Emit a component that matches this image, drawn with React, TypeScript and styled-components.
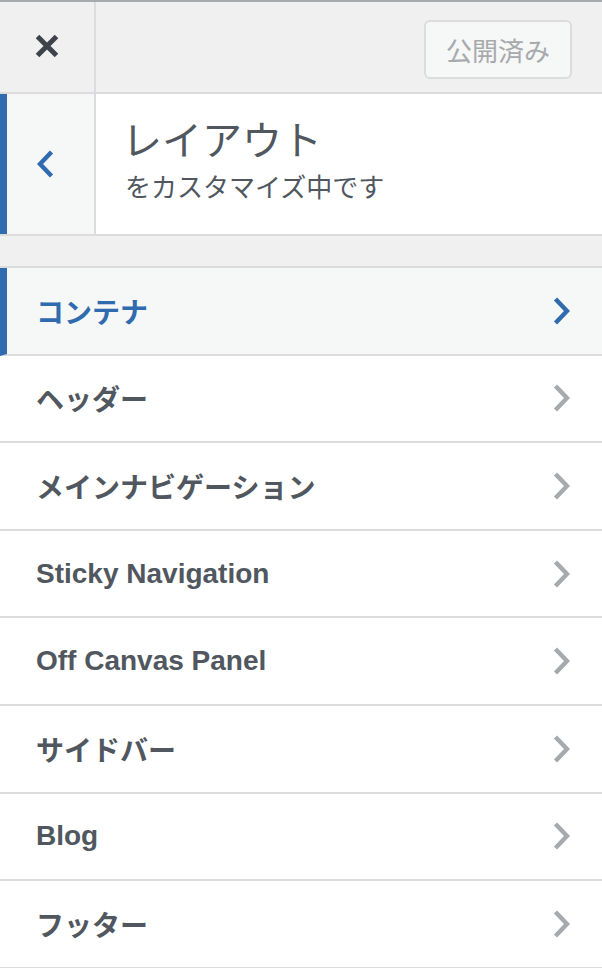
import React from 'react';
import styled, { createGlobalStyle } from 'styled-components';

const GlobalStyle = createGlobalStyle`
  html, body {
    margin: 0;
    padding: 0;
    background: #f0f0f1;
  }
  body {
    font-family: 'Liberation Sans', 'Noto Sans CJK JP', sans-serif;
    color: #50575e;
  }
  * {
    box-sizing: border-box;
  }
`;

const BLUE = '#2f6bae';

const Sidebar = styled.div`
  width: 602px;
  border-top: 2px solid #a7aaad;
  background: #f0f0f1;
`;

const HeaderActions = styled.div`
  display: flex;
  height: 92px;
  background: #f0f0f1;
  border-bottom: 2px solid #dcdcde;
`;

const CloseButton = styled.button`
  width: 96px;
  height: 100%;
  border: none;
  border-right: 2px solid #dcdcde;
  background: transparent;
  display: flex;
  align-items: center;
  justify-content: center;
  padding: 0 0 2px;
  cursor: pointer;
`;

const PublishButton = styled.button`
  margin: 18px 30px 0 auto;
  width: 148px;
  height: 59px;
  border: 2px solid #dcdcde;
  border-radius: 6px;
  background: #f6f7f7;
  color: #a7aaad;
  font-family: 'Noto Sans CJK JP', sans-serif;
  font-size: 26px;
  line-height: 1;
  padding: 0;
`;

const SectionHeader = styled.div`
  display: flex;
  height: 142px;
  background: #fff;
  border-bottom: 2px solid #dcdcde;
`;

const BackButton = styled.button`
  width: 96px;
  height: 100%;
  border: none;
  border-left: 7px solid ${BLUE};
  border-right: 2px solid #dcdcde;
  background: #f6f7f7;
  display: flex;
  align-items: center;
  padding: 0 0 0 30px;
  cursor: pointer;
`;

const TitleBlock = styled.div`
  display: flex;
  flex-direction: column;
  justify-content: center;
  padding: 0 0 4px 30px;
`;

const Title = styled.h3`
  margin: 0 0 0 -4px;
  font-family: 'Noto Sans CJK JP', sans-serif;
  font-weight: 400;
  font-size: 40px;
  line-height: 48px;
  color: #50575e;
`;

const Subtitle = styled.span`
  margin-left: -1px;
  font-family: 'Noto Sans CJK JP', sans-serif;
  font-size: 26px;
  line-height: 48px;
  color: #50575e;
`;

const Gap = styled.div`
  height: 30px;
  background: #f0f0f1;
`;

const List = styled.ul`
  list-style: none;
  margin: 0;
  padding: 0;
  border-top: 2px solid #dcdcde;
  background: #fff;
`;

const Row = styled.li<{ $active?: boolean }>`
  display: flex;
  align-items: center;
  justify-content: space-between;
  height: 87.6px;
  padding: 0 32px 0 ${({ $active }) => ($active ? '29px' : '36px')};
  border-bottom: 2px solid #dcdcde;
  border-left: ${({ $active }) => ($active ? `7px solid ${BLUE}` : 'none')};
  background: ${({ $active }) => ($active ? '#f6f7f7' : '#fff')};
  color: ${({ $active }) => ($active ? BLUE : '#50575e')};
  font-size: 28px;
  font-weight: 700;
  cursor: pointer;
`;

const CloseIcon = () => (
  <svg width="26" height="26" viewBox="0 0 26 26">
    <path d="M3.5 3.5 L22.5 22.5 M22.5 3.5 L3.5 22.5" stroke="#3c434a" strokeWidth="5" fill="none" />
  </svg>
);

const Chevron = ({ color, left }: { color: string; left?: boolean }) => (
  <svg width="17" height="28" viewBox="0 0 17 28">
    <polyline
      points={left ? '14.5,2 3,14 14.5,26' : '2.5,2 14,14 2.5,26'}
      stroke={color}
      strokeWidth="4.5"
      fill="none"
    />
  </svg>
);

const sections = [
  'コンテナ',
  'ヘッダー',
  'メインナビゲーション',
  'Sticky Navigation',
  'Off Canvas Panel',
  'サイドバー',
  'Blog',
  'フッター',
];

const App: React.FC = () => {
  return (
    <>
      <GlobalStyle />
      <Sidebar>
        <HeaderActions>
          <CloseButton aria-label="閉じる">
            <CloseIcon />
          </CloseButton>
          <PublishButton disabled>公開済み</PublishButton>
        </HeaderActions>
        <SectionHeader>
          <BackButton aria-label="戻る">
            <Chevron color={BLUE} left />
          </BackButton>
          <TitleBlock>
            <Title>レイアウト</Title>
            <Subtitle>をカスタマイズ中です</Subtitle>
          </TitleBlock>
        </SectionHeader>
        <Gap />
        <List>
          {sections.map((name, i) => (
            <Row key={name} $active={i === 0}>
              <span>{name}</span>
              <Chevron color={i === 0 ? BLUE : '#a7aaad'} />
            </Row>
          ))}
        </List>
      </Sidebar>
    </>
  );
};

export default App;
